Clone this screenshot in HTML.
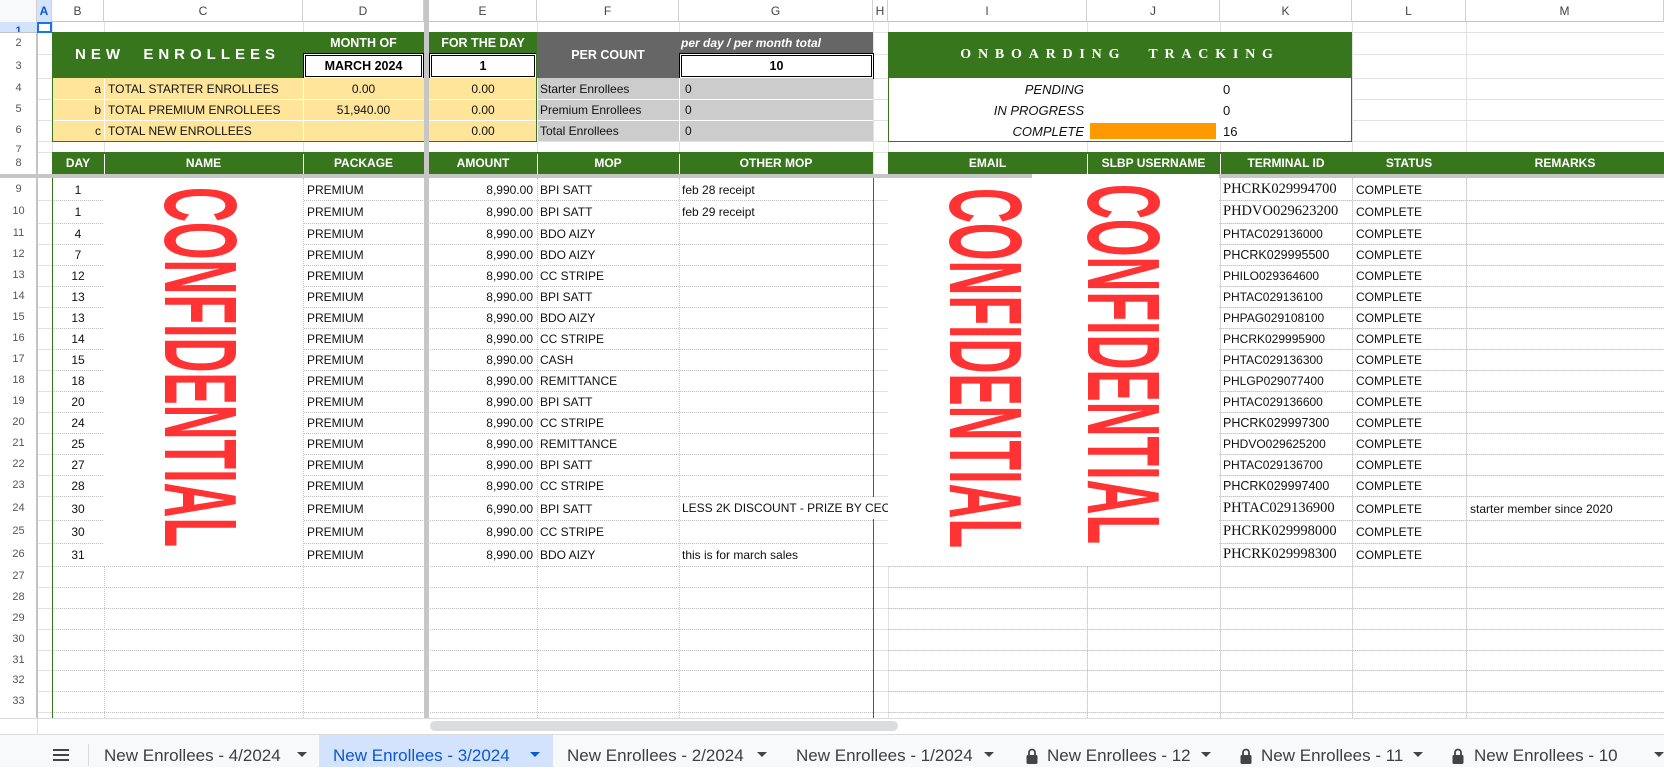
<!DOCTYPE html>
<html><head><meta charset="utf-8">
<style>
*{margin:0;padding:0;box-sizing:border-box}
body{width:1664px;height:767px;overflow:hidden;background:#fff;position:relative;font-family:"Liberation Sans",Arial,sans-serif}
div{position:absolute}
.h{left:0;width:1664px;height:1px;background:#e2e2e2}
.hd{left:52px;width:821px;height:0;border-top:1px dotted #bdbdbd}
.hd2{left:888px;width:776px;height:0;border-top:1px dotted #c8c8c8}
.v{top:22px;width:1px;height:696px;background:#e2e2e2}
.vd{top:178px;width:0;height:540px;border-left:1px dotted #c8c8c8}
.ch{top:0;height:22px;line-height:22px;text-align:center;font-size:12px;color:#444;border-right:1px solid #d0d0d0}
.rh{left:0;width:37px;text-align:center;font-size:11px;color:#555}
.t{font-size:12px;white-space:nowrap;color:#111}
.gh{color:#fff;font-weight:bold;font-size:12px;text-align:center;line-height:22px;top:152px;height:22px}
.tab{top:740px;height:32px;line-height:32px;font-size:17px;color:#3c4043;white-space:nowrap}
.arr{top:752px;width:0;height:0;border-left:5px solid transparent;border-right:5px solid transparent;border-top:5px solid #444}
.sf{font-family:"Liberation Serif",serif;font-size:14.5px}
</style></head><body>

<div style="left:0;top:0;width:1664px;height:22px;background:#fff;border-bottom:1px solid #c4c4c4"></div>
<div class="ch" style="left:0;width:37px;background:#f8f9fa"></div>
<div class="ch" style="left:37px;width:15px;background:#d3e3fd;font-weight:bold;color:#0b57d0">A</div>
<div class="ch" style="left:52px;width:52px">B</div>
<div class="ch" style="left:104px;width:199px">C</div>
<div class="ch" style="left:303px;width:121px">D</div>
<div class="ch" style="left:429px;width:108px">E</div>
<div class="ch" style="left:537px;width:142px">F</div>
<div class="ch" style="left:679px;width:194px">G</div>
<div class="ch" style="left:873px;width:15px">H</div>
<div class="ch" style="left:888px;width:199px">I</div>
<div class="ch" style="left:1087px;width:133px">J</div>
<div class="ch" style="left:1220px;width:132px">K</div>
<div class="ch" style="left:1352px;width:114px">L</div>
<div class="ch" style="left:1466px;width:198px">M</div>

<div class="h" style="top:32px"></div><div class="h" style="top:54px"></div><div class="h" style="top:78px"></div>
<div class="h" style="top:99px"></div><div class="h" style="top:120px"></div><div class="h" style="top:141px"></div>
<div class="h" style="top:152px"></div>
<div class="h" style="top:200px"></div><div class="h" style="top:223px"></div><div class="h" style="top:244px"></div><div class="h" style="top:265px"></div><div class="h" style="top:286px"></div><div class="h" style="top:307px"></div><div class="h" style="top:328px"></div><div class="h" style="top:349px"></div><div class="h" style="top:370px"></div><div class="h" style="top:391px"></div><div class="h" style="top:412px"></div><div class="h" style="top:433px"></div><div class="h" style="top:454px"></div><div class="h" style="top:475px"></div><div class="h" style="top:496px"></div><div class="h" style="top:520px"></div><div class="h" style="top:543px"></div><div class="h" style="top:566px"></div><div class="h" style="top:587px"></div><div class="h" style="top:608px"></div><div class="h" style="top:629px"></div><div class="h" style="top:650px"></div><div class="h" style="top:670px"></div><div class="h" style="top:691px"></div><div class="h" style="top:712px"></div>
<div class="v" style="left:37px;background:#c4c4c4"></div>
<div class="v" style="left:52px"></div><div class="v" style="left:104px"></div><div class="v" style="left:303px"></div>
<div class="v" style="left:537px"></div><div class="v" style="left:679px"></div><div class="v" style="left:873px"></div><div class="v" style="left:888px"></div><div class="v" style="left:1087px"></div><div class="v" style="left:1220px"></div><div class="v" style="left:1352px"></div><div class="v" style="left:1466px"></div>
<div style="left:53px;top:178px;width:820px;height:540px;background:#fff"></div>
<div class="hd" style="top:200px"></div><div class="hd" style="top:223px"></div><div class="hd" style="top:244px"></div><div class="hd" style="top:265px"></div><div class="hd" style="top:286px"></div><div class="hd" style="top:307px"></div><div class="hd" style="top:328px"></div><div class="hd" style="top:349px"></div><div class="hd" style="top:370px"></div><div class="hd" style="top:391px"></div><div class="hd" style="top:412px"></div><div class="hd" style="top:433px"></div><div class="hd" style="top:454px"></div><div class="hd" style="top:475px"></div><div class="hd" style="top:496px"></div><div class="hd" style="top:520px"></div><div class="hd" style="top:543px"></div><div class="hd" style="top:566px"></div><div class="hd" style="top:587px"></div><div class="hd" style="top:608px"></div><div class="hd" style="top:629px"></div><div class="hd" style="top:650px"></div><div class="hd" style="top:670px"></div><div class="hd" style="top:691px"></div><div class="hd" style="top:712px"></div>
<div class="hd2" style="top:200px"></div><div class="hd2" style="top:223px"></div><div class="hd2" style="top:244px"></div><div class="hd2" style="top:265px"></div><div class="hd2" style="top:286px"></div><div class="hd2" style="top:307px"></div><div class="hd2" style="top:328px"></div><div class="hd2" style="top:349px"></div><div class="hd2" style="top:370px"></div><div class="hd2" style="top:391px"></div><div class="hd2" style="top:412px"></div><div class="hd2" style="top:433px"></div><div class="hd2" style="top:454px"></div><div class="hd2" style="top:475px"></div><div class="hd2" style="top:496px"></div><div class="hd2" style="top:520px"></div><div class="hd2" style="top:543px"></div><div class="hd2" style="top:566px"></div><div class="hd2" style="top:587px"></div><div class="hd2" style="top:608px"></div><div class="hd2" style="top:629px"></div><div class="hd2" style="top:650px"></div><div class="hd2" style="top:670px"></div><div class="hd2" style="top:691px"></div><div class="hd2" style="top:712px"></div>
<div class="vd" style="left:104px"></div><div class="vd" style="left:303px"></div><div class="vd" style="left:537px"></div><div class="vd" style="left:679px"></div><div class="vd" style="left:1087px"></div><div class="vd" style="left:1220px"></div><div class="vd" style="left:1352px"></div><div class="vd" style="left:1466px"></div>
<div style="left:52px;top:178px;width:1px;height:540px;background:#38761d"></div>
<div style="left:873px;top:178px;width:1px;height:540px;background:#38761d"></div>

<div style="left:0;top:22px;width:37px;height:696px;background:#fff;border-right:1px solid #c4c4c4"></div>
<div style="left:0;top:22px;width:37px;height:10px;background:#d3e3fd"></div>
<div class="rh" style="top:24px;height:8px;overflow:hidden;line-height:14px;color:#0b57d0;font-weight:bold">1</div>
<div class="rh" style="top:32px;line-height:22px">2</div><div class="rh" style="top:54px;line-height:24px">3</div>
<div class="rh" style="top:78px;line-height:21px">4</div><div class="rh" style="top:99px;line-height:21px">5</div>
<div class="rh" style="top:120px;line-height:21px">6</div><div class="rh" style="top:143px;height:9px;overflow:hidden;line-height:14px">7</div>
<div class="rh" style="top:152px;line-height:22px">8</div>
<div class="rh" style="top:178px;line-height:22px">9</div><div class="rh" style="top:200px;line-height:23px">10</div>
<div class="rh" style="top:223px;line-height:21px">11</div><div class="rh" style="top:244px;line-height:21px">12</div><div class="rh" style="top:265px;line-height:21px">13</div><div class="rh" style="top:286px;line-height:21px">14</div><div class="rh" style="top:307px;line-height:21px">15</div><div class="rh" style="top:328px;line-height:21px">16</div><div class="rh" style="top:349px;line-height:21px">17</div><div class="rh" style="top:370px;line-height:21px">18</div><div class="rh" style="top:391px;line-height:21px">19</div><div class="rh" style="top:412px;line-height:21px">20</div><div class="rh" style="top:433px;line-height:21px">21</div><div class="rh" style="top:454px;line-height:21px">22</div><div class="rh" style="top:475px;line-height:21px">23</div><div class="rh" style="top:496px;line-height:24px">24</div><div class="rh" style="top:520px;line-height:23px">25</div><div class="rh" style="top:543px;line-height:23px">26</div><div class="rh" style="top:566px;line-height:21px">27</div><div class="rh" style="top:587px;line-height:21px">28</div><div class="rh" style="top:608px;line-height:21px">29</div><div class="rh" style="top:629px;line-height:21px">30</div><div class="rh" style="top:650px;line-height:20px">31</div><div class="rh" style="top:670px;line-height:21px">32</div><div class="rh" style="top:691px;line-height:21px">33</div>
<div class="h" style="top:32px;width:37px;background:#c4c4c4"></div>
<div style="left:37px;top:22px;width:15px;height:11px;border:2px solid #1a73e8"></div>

<div style="left:52px;top:32px;width:372px;height:46px;background:#38761d"></div>
<div style="left:429px;top:32px;width:108px;height:46px;background:#38761d"></div>
<div style="left:52px;top:32px;width:251px;height:46px;line-height:46px;text-align:center;color:#fff;font-weight:bold;font-size:15px;letter-spacing:5px">NEW&nbsp; ENROLLEES</div>
<div style="left:303px;top:32px;width:121px;line-height:22px;text-align:center;color:#fff;font-weight:bold;font-size:12.5px">MONTH OF</div>
<div style="left:429px;top:32px;width:108px;line-height:22px;text-align:center;color:#fff;font-weight:bold;font-size:12.5px">FOR THE DAY</div>
<div style="left:303px;top:53px;width:121px;height:26px;background:#fff;border:3px double #000;text-align:center;line-height:20px;font-weight:bold;font-size:12.5px">MARCH 2024</div>
<div style="left:429px;top:53px;width:108px;height:26px;background:#fff;border:3px double #000;text-align:center;line-height:20px;font-weight:bold;font-size:12.5px">1</div>
<div style="left:537px;top:32px;width:336px;height:46px;background:#666"></div>
<div style="left:537px;top:32px;width:142px;line-height:46px;text-align:center;color:#fff;font-weight:bold;font-size:12.5px">PER COUNT</div>
<div style="left:681px;top:32px;line-height:22px;color:#fff;font-weight:bold;font-style:italic;font-size:12px">per day / per month total</div>
<div style="left:679px;top:53px;width:195px;height:26px;background:#fff;border:3px double #000;text-align:center;line-height:20px;font-weight:bold;font-size:12.5px">10</div>
<div style="left:52px;top:78px;width:372px;height:63px;background:#ffe599"></div>
<div style="left:429px;top:78px;width:108px;height:63px;background:#ffe599"></div>
<div style="left:537px;top:78px;width:336px;height:63px;background:#ccc"></div>
<div style="left:52px;top:99px;width:821px;height:1px;background:#fff"></div>
<div style="left:52px;top:120px;width:821px;height:1px;background:#fff"></div>
<div style="left:303px;top:78px;width:1px;height:63px;background:#fff"></div>
<div style="left:537px;top:78px;width:1px;height:63px;background:#fff"></div>
<div style="left:679px;top:78px;width:1px;height:63px;background:#fff"></div>
<div style="left:104px;top:79px;width:1px;height:61px;background:#fff"></div>
<div style="left:52px;top:32px;width:485px;height:110px;border:1px solid #38761d"></div>
<div class="t" style="left:52px;top:79px;width:49px;text-align:right;line-height:21px">a</div>
<div class="t" style="left:52px;top:100px;width:49px;text-align:right;line-height:21px">b</div>
<div class="t" style="left:52px;top:121px;width:49px;text-align:right;line-height:21px">c</div>
<div class="t" style="left:108px;top:79px;line-height:21px">TOTAL STARTER ENROLLEES</div>
<div class="t" style="left:108px;top:100px;line-height:21px">TOTAL PREMIUM ENROLLEES</div>
<div class="t" style="left:108px;top:121px;line-height:21px">TOTAL NEW ENROLLEES</div>
<div class="t" style="left:303px;top:79px;width:121px;text-align:center;line-height:21px">0.00</div>
<div class="t" style="left:303px;top:100px;width:121px;text-align:center;line-height:21px">51,940.00</div>
<div class="t" style="left:429px;top:79px;width:108px;text-align:center;line-height:21px">0.00</div>
<div class="t" style="left:429px;top:100px;width:108px;text-align:center;line-height:21px">0.00</div>
<div class="t" style="left:429px;top:121px;width:108px;text-align:center;line-height:21px">0.00</div>
<div class="t" style="left:540px;top:79px;line-height:21px">Starter Enrollees</div>
<div class="t" style="left:540px;top:100px;line-height:21px">Premium Enrollees</div>
<div class="t" style="left:540px;top:121px;line-height:21px">Total Enrollees</div>
<div class="t" style="left:685px;top:79px;line-height:21px">0</div>
<div class="t" style="left:685px;top:100px;line-height:21px">0</div>
<div class="t" style="left:685px;top:121px;line-height:21px">0</div>

<div style="left:888px;top:32px;width:464px;height:110px;background:#fff;border:1px solid #38761d"></div>
<div style="left:888px;top:32px;width:464px;height:46px;background:#38761d"></div>
<div style="left:888px;top:32px;width:464px;line-height:46px;text-align:center;color:#fff;font-family:'Liberation Serif',serif;font-weight:bold;font-size:14px;letter-spacing:6.8px;word-spacing:12px">ONBOARDING TRACKING</div>
<div class="t" style="left:888px;top:79px;width:196px;text-align:right;line-height:21px;font-style:italic;font-size:13px">PENDING</div>
<div class="t" style="left:888px;top:100px;width:196px;text-align:right;line-height:21px;font-style:italic;font-size:13px">IN PROGRESS</div>
<div class="t" style="left:888px;top:121px;width:196px;text-align:right;line-height:21px;font-style:italic;font-size:13px">COMPLETE</div>
<div style="left:1090px;top:123px;width:126px;height:16px;background:#ff9900"></div>
<div class="t" style="left:1223px;top:79px;line-height:21px;font-size:13px">0</div>
<div class="t" style="left:1223px;top:100px;line-height:21px;font-size:13px">0</div>
<div class="t" style="left:1223px;top:121px;line-height:21px;font-size:13px">16</div>

<div style="left:52px;top:152px;width:821px;height:22px;background:#38761d"></div>
<div style="left:888px;top:152px;width:776px;height:22px;background:#38761d"></div>
<div class="gh" style="left:52px;width:52px">DAY</div>
<div class="gh" style="left:104px;width:199px">NAME</div>
<div class="gh" style="left:303px;width:121px">PACKAGE</div>
<div class="gh" style="left:429px;width:108px">AMOUNT</div>
<div class="gh" style="left:537px;width:142px">MOP</div>
<div class="gh" style="left:679px;width:194px">OTHER MOP</div>
<div class="gh" style="left:888px;width:199px">EMAIL</div>
<div class="gh" style="left:1087px;width:133px">SLBP USERNAME</div>
<div class="gh" style="left:1220px;width:132px">TERMINAL ID</div>
<div class="gh" style="left:1352px;width:114px">STATUS</div>
<div class="gh" style="left:1466px;width:198px">REMARKS</div>
<div style="left:104px;top:154px;width:1px;height:20px;background:#fff"></div>
<div style="left:303px;top:154px;width:1px;height:20px;background:#fff"></div>
<div style="left:537px;top:154px;width:1px;height:20px;background:#fff"></div>
<div style="left:679px;top:154px;width:1px;height:20px;background:#fff"></div>
<div style="left:1087px;top:154px;width:1px;height:20px;background:#fff"></div>
<div style="left:1220px;top:154px;width:1px;height:20px;background:#fff"></div>

<div style="left:0;top:174px;width:1664px;height:4px;background:#c6c6c6"></div>
<div style="left:424px;top:0;width:5px;height:718px;background:#c6c6c6"></div>

<div class="t" style="left:52px;top:179px;width:52px;text-align:center;line-height:22px">1</div>
<div class="t" style="left:52px;top:201px;width:52px;text-align:center;line-height:23px">1</div>
<div class="t" style="left:52px;top:224px;width:52px;text-align:center;line-height:21px">4</div>
<div class="t" style="left:52px;top:245px;width:52px;text-align:center;line-height:21px">7</div>
<div class="t" style="left:52px;top:266px;width:52px;text-align:center;line-height:21px">12</div>
<div class="t" style="left:52px;top:287px;width:52px;text-align:center;line-height:21px">13</div>
<div class="t" style="left:52px;top:308px;width:52px;text-align:center;line-height:21px">13</div>
<div class="t" style="left:52px;top:329px;width:52px;text-align:center;line-height:21px">14</div>
<div class="t" style="left:52px;top:350px;width:52px;text-align:center;line-height:21px">15</div>
<div class="t" style="left:52px;top:371px;width:52px;text-align:center;line-height:21px">18</div>
<div class="t" style="left:52px;top:392px;width:52px;text-align:center;line-height:21px">20</div>
<div class="t" style="left:52px;top:413px;width:52px;text-align:center;line-height:21px">24</div>
<div class="t" style="left:52px;top:434px;width:52px;text-align:center;line-height:21px">25</div>
<div class="t" style="left:52px;top:455px;width:52px;text-align:center;line-height:21px">27</div>
<div class="t" style="left:52px;top:476px;width:52px;text-align:center;line-height:21px">28</div>
<div class="t" style="left:52px;top:497px;width:52px;text-align:center;line-height:24px">30</div>
<div class="t" style="left:52px;top:521px;width:52px;text-align:center;line-height:23px">30</div>
<div class="t" style="left:52px;top:544px;width:52px;text-align:center;line-height:23px">31</div>

<div class="t" style="left:307px;top:179px;line-height:22px">PREMIUM</div>
<div class="t" style="left:307px;top:201px;line-height:23px">PREMIUM</div>
<div class="t" style="left:307px;top:224px;line-height:21px">PREMIUM</div>
<div class="t" style="left:307px;top:245px;line-height:21px">PREMIUM</div>
<div class="t" style="left:307px;top:266px;line-height:21px">PREMIUM</div>
<div class="t" style="left:307px;top:287px;line-height:21px">PREMIUM</div>
<div class="t" style="left:307px;top:308px;line-height:21px">PREMIUM</div>
<div class="t" style="left:307px;top:329px;line-height:21px">PREMIUM</div>
<div class="t" style="left:307px;top:350px;line-height:21px">PREMIUM</div>
<div class="t" style="left:307px;top:371px;line-height:21px">PREMIUM</div>
<div class="t" style="left:307px;top:392px;line-height:21px">PREMIUM</div>
<div class="t" style="left:307px;top:413px;line-height:21px">PREMIUM</div>
<div class="t" style="left:307px;top:434px;line-height:21px">PREMIUM</div>
<div class="t" style="left:307px;top:455px;line-height:21px">PREMIUM</div>
<div class="t" style="left:307px;top:476px;line-height:21px">PREMIUM</div>
<div class="t" style="left:307px;top:497px;line-height:24px">PREMIUM</div>
<div class="t" style="left:307px;top:521px;line-height:23px">PREMIUM</div>
<div class="t" style="left:307px;top:544px;line-height:23px">PREMIUM</div>

<div class="t" style="left:429px;top:179px;width:104px;text-align:right;line-height:22px">8,990.00</div>
<div class="t" style="left:429px;top:201px;width:104px;text-align:right;line-height:23px">8,990.00</div>
<div class="t" style="left:429px;top:224px;width:104px;text-align:right;line-height:21px">8,990.00</div>
<div class="t" style="left:429px;top:245px;width:104px;text-align:right;line-height:21px">8,990.00</div>
<div class="t" style="left:429px;top:266px;width:104px;text-align:right;line-height:21px">8,990.00</div>
<div class="t" style="left:429px;top:287px;width:104px;text-align:right;line-height:21px">8,990.00</div>
<div class="t" style="left:429px;top:308px;width:104px;text-align:right;line-height:21px">8,990.00</div>
<div class="t" style="left:429px;top:329px;width:104px;text-align:right;line-height:21px">8,990.00</div>
<div class="t" style="left:429px;top:350px;width:104px;text-align:right;line-height:21px">8,990.00</div>
<div class="t" style="left:429px;top:371px;width:104px;text-align:right;line-height:21px">8,990.00</div>
<div class="t" style="left:429px;top:392px;width:104px;text-align:right;line-height:21px">8,990.00</div>
<div class="t" style="left:429px;top:413px;width:104px;text-align:right;line-height:21px">8,990.00</div>
<div class="t" style="left:429px;top:434px;width:104px;text-align:right;line-height:21px">8,990.00</div>
<div class="t" style="left:429px;top:455px;width:104px;text-align:right;line-height:21px">8,990.00</div>
<div class="t" style="left:429px;top:476px;width:104px;text-align:right;line-height:21px">8,990.00</div>
<div class="t" style="left:429px;top:497px;width:104px;text-align:right;line-height:24px">6,990.00</div>
<div class="t" style="left:429px;top:521px;width:104px;text-align:right;line-height:23px">8,990.00</div>
<div class="t" style="left:429px;top:544px;width:104px;text-align:right;line-height:23px">8,990.00</div>

<div class="t" style="left:540px;top:179px;line-height:22px">BPI SATT</div>
<div class="t" style="left:540px;top:201px;line-height:23px">BPI SATT</div>
<div class="t" style="left:540px;top:224px;line-height:21px">BDO AIZY</div>
<div class="t" style="left:540px;top:245px;line-height:21px">BDO AIZY</div>
<div class="t" style="left:540px;top:266px;line-height:21px">CC STRIPE</div>
<div class="t" style="left:540px;top:287px;line-height:21px">BPI SATT</div>
<div class="t" style="left:540px;top:308px;line-height:21px">BDO AIZY</div>
<div class="t" style="left:540px;top:329px;line-height:21px">CC STRIPE</div>
<div class="t" style="left:540px;top:350px;line-height:21px">CASH</div>
<div class="t" style="left:540px;top:371px;line-height:21px">REMITTANCE</div>
<div class="t" style="left:540px;top:392px;line-height:21px">BPI SATT</div>
<div class="t" style="left:540px;top:413px;line-height:21px">CC STRIPE</div>
<div class="t" style="left:540px;top:434px;line-height:21px">REMITTANCE</div>
<div class="t" style="left:540px;top:455px;line-height:21px">BPI SATT</div>
<div class="t" style="left:540px;top:476px;line-height:21px">CC STRIPE</div>
<div class="t" style="left:540px;top:497px;line-height:24px">BPI SATT</div>
<div class="t" style="left:540px;top:521px;line-height:23px">CC STRIPE</div>
<div class="t" style="left:540px;top:544px;line-height:23px">BDO AIZY</div>

<div class="t" style="left:682px;top:179px;line-height:22px">feb 28 receipt</div>
<div class="t" style="left:682px;top:201px;line-height:23px">feb 29 receipt</div>
<div class="t" style="left:682px;top:497px;line-height:22px;background:#fff">LESS 2K DISCOUNT - PRIZE BY CEO</div>
<div class="t" style="left:682px;top:544px;line-height:23px">this is for march sales</div>

<div class="t sf" style="left:1223px;top:178px;line-height:22px">PHCRK029994700</div>
<div class="t sf" style="left:1223px;top:200px;line-height:23px">PHDVO029623200</div>
<div class="t" style="left:1223px;top:224px;line-height:21px">PHTAC029136000</div>
<div class="t" style="left:1223px;top:245px;line-height:21px;font-size:12.5px">PHCRK029995500</div>
<div class="t" style="left:1223px;top:266px;line-height:21px">PHILO029364600</div>
<div class="t" style="left:1223px;top:287px;line-height:21px">PHTAC029136100</div>
<div class="t" style="left:1223px;top:308px;line-height:21px">PHPAG029108100</div>
<div class="t" style="left:1223px;top:329px;line-height:21px">PHCRK029995900</div>
<div class="t" style="left:1223px;top:350px;line-height:21px">PHTAC029136300</div>
<div class="t" style="left:1223px;top:371px;line-height:21px">PHLGP029077400</div>
<div class="t" style="left:1223px;top:392px;line-height:21px">PHTAC029136600</div>
<div class="t" style="left:1223px;top:413px;line-height:21px;font-size:12.5px">PHCRK029997300</div>
<div class="t" style="left:1223px;top:434px;line-height:21px">PHDVO029625200</div>
<div class="t" style="left:1223px;top:455px;line-height:21px">PHTAC029136700</div>
<div class="t" style="left:1223px;top:476px;line-height:21px;font-size:12.5px">PHCRK029997400</div>
<div class="t sf" style="left:1223px;top:496px;line-height:24px">PHTAC029136900</div>
<div class="t sf" style="left:1223px;top:520px;line-height:23px">PHCRK029998000</div>
<div class="t sf" style="left:1223px;top:543px;line-height:23px">PHCRK029998300</div>

<div class="t" style="left:1356px;top:179px;line-height:22px">COMPLETE</div>
<div class="t" style="left:1356px;top:201px;line-height:23px">COMPLETE</div>
<div class="t" style="left:1356px;top:224px;line-height:21px">COMPLETE</div>
<div class="t" style="left:1356px;top:245px;line-height:21px">COMPLETE</div>
<div class="t" style="left:1356px;top:266px;line-height:21px">COMPLETE</div>
<div class="t" style="left:1356px;top:287px;line-height:21px">COMPLETE</div>
<div class="t" style="left:1356px;top:308px;line-height:21px">COMPLETE</div>
<div class="t" style="left:1356px;top:329px;line-height:21px">COMPLETE</div>
<div class="t" style="left:1356px;top:350px;line-height:21px">COMPLETE</div>
<div class="t" style="left:1356px;top:371px;line-height:21px">COMPLETE</div>
<div class="t" style="left:1356px;top:392px;line-height:21px">COMPLETE</div>
<div class="t" style="left:1356px;top:413px;line-height:21px">COMPLETE</div>
<div class="t" style="left:1356px;top:434px;line-height:21px">COMPLETE</div>
<div class="t" style="left:1356px;top:455px;line-height:21px">COMPLETE</div>
<div class="t" style="left:1356px;top:476px;line-height:21px">COMPLETE</div>
<div class="t" style="left:1356px;top:497px;line-height:24px">COMPLETE</div>
<div class="t" style="left:1356px;top:521px;line-height:23px">COMPLETE</div>
<div class="t" style="left:1356px;top:544px;line-height:23px">COMPLETE</div>
<div class="t" style="left:1470px;top:497px;line-height:24px">starter member since 2020</div>

<div style="left:104px;top:178px;width:199px;height:388px;background:#fff"></div>
<div style="left:888px;top:178px;width:331px;height:388px;background:#fff"></div>
<div style="left:1032px;top:174px;width:187px;height:4px;background:#fff"></div>
<svg style="position:absolute;left:0;top:0" width="1664" height="767">
<g font-family="Liberation Sans, Arial, sans-serif" font-weight="bold" font-size="103" fill="#ff3333">
<text transform="translate(165,187) rotate(90)" textLength="360" lengthAdjust="spacingAndGlyphs">CONFIDENTIAL</text>
<text transform="translate(950,188) rotate(90)" textLength="360" lengthAdjust="spacingAndGlyphs">CONFIDENTIAL</text>
<text transform="translate(1088,184) rotate(90)" textLength="360" lengthAdjust="spacingAndGlyphs">CONFIDENTIAL</text>
</g>
</svg>

<div style="left:0;top:718px;width:1664px;height:17px;background:#fff;border-top:1px solid #dadce0;border-bottom:1px solid #dadce0"></div>
<div style="left:37px;top:718px;width:1px;height:16px;background:#dadce0"></div>
<div style="left:430px;top:721px;width:468px;height:10px;border-radius:5px;background:#dadce0"></div>

<div style="left:0;top:735px;width:1664px;height:32px;background:#f8f9fa"></div>
<div style="left:319px;top:735px;width:234px;height:32px;background:#d3e3fd"></div>
<div style="left:53px;top:749px;width:16px;height:2px;background:#444"></div>
<div style="left:53px;top:754px;width:16px;height:2px;background:#444"></div>
<div style="left:53px;top:759px;width:16px;height:2px;background:#444"></div>
<div style="left:88px;top:744px;width:1px;height:22px;background:#dadce0"></div>
<div class="tab" style="left:104px">New Enrollees - 4/2024</div><div class="arr" style="left:297px"></div>
<div class="tab" style="left:333px;color:#0b57d0">New Enrollees - 3/2024</div><div class="arr" style="left:530px;border-top-color:#0b57d0"></div>
<div class="tab" style="left:567px">New Enrollees - 2/2024</div><div class="arr" style="left:757px"></div>
<div class="tab" style="left:796px">New Enrollees - 1/2024</div><div class="arr" style="left:984px"></div>
<svg style="position:absolute;left:1026px;top:748px" width="12" height="16" viewBox="0 0 12 16"><path d="M3 7V4.5a3 3 0 0 1 6 0V7" fill="none" stroke="#444" stroke-width="1.8"/><rect x="0.5" y="7" width="11" height="9" rx="1.5" fill="#444"/></svg>
<div class="tab" style="left:1047px">New Enrollees - 12</div><div class="arr" style="left:1201px"></div>
<svg style="position:absolute;left:1240px;top:748px" width="12" height="16" viewBox="0 0 12 16"><path d="M3 7V4.5a3 3 0 0 1 6 0V7" fill="none" stroke="#444" stroke-width="1.8"/><rect x="0.5" y="7" width="11" height="9" rx="1.5" fill="#444"/></svg>
<div class="tab" style="left:1261px">New Enrollees - 11</div><div class="arr" style="left:1413px"></div>
<svg style="position:absolute;left:1452px;top:748px" width="12" height="16" viewBox="0 0 12 16"><path d="M3 7V4.5a3 3 0 0 1 6 0V7" fill="none" stroke="#444" stroke-width="1.8"/><rect x="0.5" y="7" width="11" height="9" rx="1.5" fill="#444"/></svg>
<div class="tab" style="left:1474px">New Enrollees - 10</div><div class="arr" style="left:1654px"></div>
</body></html>
